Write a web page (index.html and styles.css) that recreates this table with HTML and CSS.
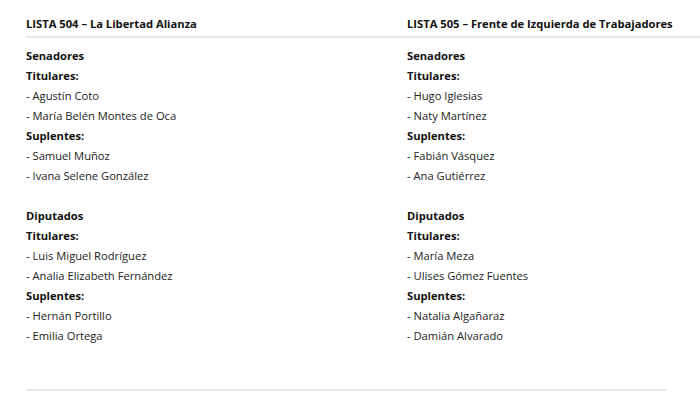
FILE: index.html
```html
<!DOCTYPE html>
<html lang="es">
<head>
<meta charset="utf-8">
<link rel="stylesheet" href="styles.css">
</head>
<body>
<div class="page">
  <div class="head">
    <div class="col-title">LISTA 504 – La Libertad Alianza</div>
    <div class="col-title">LISTA 505 – Frente de Izquierda de Trabajadores</div>
  </div>
  <div class="body">
    <div class="col">
      <div class="b">Senadores</div>
      <div class="b">Titulares:</div>
      <div>- Agustín Coto</div>
      <div>- María Belén Montes de Oca</div>
      <div class="b">Suplentes:</div>
      <div>- Samuel Muñoz</div>
      <div>- Ivana Selene González</div>
      <div class="gap"></div>
      <div class="b">Diputados</div>
      <div class="b">Titulares:</div>
      <div>- Luis Miguel Rodríguez</div>
      <div>- Analia Elizabeth Fernández</div>
      <div class="b">Suplentes:</div>
      <div>- Hernán Portillo</div>
      <div>- Emilia Ortega</div>
    </div>
    <div class="col">
      <div class="b">Senadores</div>
      <div class="b">Titulares:</div>
      <div>- Hugo Iglesias</div>
      <div>- Naty Martínez</div>
      <div class="b">Suplentes:</div>
      <div>- Fabián Vásquez</div>
      <div>- Ana Gutiérrez</div>
      <div class="gap"></div>
      <div class="b">Diputados</div>
      <div class="b">Titulares:</div>
      <div>- María Meza</div>
      <div>- Ulises Gómez Fuentes</div>
      <div class="b">Suplentes:</div>
      <div>- Natalia Algañaraz</div>
      <div>- Damián Alvarado</div>
    </div>
  </div>
  <div class="rule"></div>
</div>
</body>
</html>
```
FILE: styles.css
```css
html, body {
  margin: 0;
  padding: 0;
  background: #ffffff;
}
.page {
  padding-left: 26px;
  font-family: "Open Sans", "Noto Sans", sans-serif;
  font-size: 11.2px;
  line-height: 20px;
  color: #222;
}
.head {
  display: grid;
  grid-template-columns: 381px 1fr;
  padding-top: 14px;
  padding-bottom: 2px;
  border-bottom: 2px solid #e6e6e6;
}
.col-title {
  font-weight: 700;
  color: #111;
}
.body {
  display: grid;
  grid-template-columns: 381px 1fr;
  padding-top: 8px;
}
.b {
  font-weight: 700;
  color: #111;
}
.gap {
  height: 20px;
}
.rule {
  width: 640px;
  height: 2px;
  background: #e6e6e6;
  margin-top: 43px;
}
```
